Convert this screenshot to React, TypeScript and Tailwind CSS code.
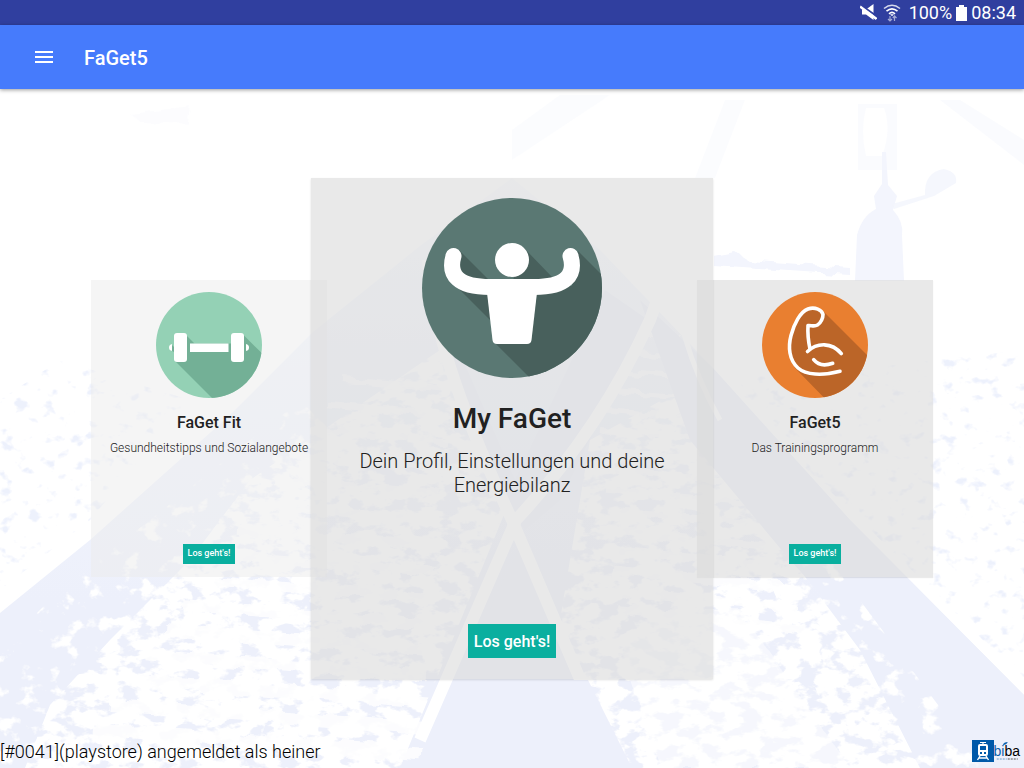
import type { ReactNode } from "react";

function StrongIcon() {
  return (
    <svg viewBox="0 0 180 180" className="size-full" aria-hidden="true">
      <defs>
        <clipPath id="strong-disc">
          <circle cx="90" cy="90" r="90" />
        </clipPath>
      </defs>
      <circle cx="90" cy="90" r="90" fill="#5a7873" />
      <g fill="#48605c" clipPath="url(#strong-disc)">
        <path d="M37 52L67 82V92L30 80Z" />
        <path d="M29 83L68 122L66 92Z" />
        <path d="M102 50L132 81L90 85Z" />
        <path d="M156 53L210 107V210H138L73 145L110 90L150 88Z" />
      </g>
      <circle cx="90" cy="62" r="17" fill="#fff" />
      <path
        d="M31.5 58C26 77 36 89 68 89H112C144 89 154 77 148.500 58"
        fill="none"
        stroke="#fff"
        strokeWidth="16"
        strokeLinecap="round"
      />
      <path d="M64 86H116L109.500 142Q109 146 105 146H75Q71 146 70.500 142Z" fill="#fff" />
    </svg>
  );
}

function DumbbellIcon() {
  return (
    <svg viewBox="0 0 106 106" className="size-full" aria-hidden="true">
      <defs>
        <clipPath id="dumbbell-disc">
          <circle cx="53" cy="53" r="53" />
        </clipPath>
      </defs>
      <circle cx="53" cy="53" r="53" fill="#94d1b5" />
      <g fill="#73b096" clipPath="url(#dumbbell-disc)">
        <path d="M19 69L30 43L38.500 51.500H76L87 42.500L140 95V120H70Z" />
        <path d="M15 52L22 59V62L14 58Z" />
      </g>
      <g fill="#fff">
        <rect x="18" y="41" width="13" height="29" rx="3" />
        <rect x="75" y="41" width="13" height="29" rx="3" />
        <rect x="34" y="51.500" width="38.500" height="8.500" />
        <path d="M16 52V59Q13 58.500 13 55.500Q13 52.500 16 52Z" />
        <path d="M90 52V59Q93 58.500 93 55.500Q93 52.500 90 52Z" />
      </g>
    </svg>
  );
}

function BicepsIcon() {
  return (
    <svg viewBox="0 0 106 106" className="size-full" aria-hidden="true">
      <defs>
        <clipPath id="biceps-disc">
          <circle cx="53" cy="53" r="53" />
        </clipPath>
      </defs>
      <circle cx="53" cy="53" r="53" fill="#e97f30" />
      <path
        d="M61 19L120 78V120H76L35 78C27 70 26 55 29 44C33 28 42 16 51 16Z"
        fill="#bb6528"
        clipPath="url(#biceps-disc)"
      />
      <g fill="none" stroke="#fff" strokeWidth="3.600" strokeLinecap="round" strokeLinejoin="round">
        <path d="M78 79.300C60 84 44 83 36 76C27 68 26 55 29 43.500C32 32 38 20 46 17C53 14.500 60 18 61 22.500C61 26 59 31 55.500 33C52 35 49 33 46 33.500C45.500 42 46.500 50 48 57" />
        <path d="M45.500 59.500C55 50.500 70 50 79.300 61.700" />
        <path d="M51.700 67.700C56 73 63 74 70.700 71.300" />
      </g>
    </svg>
  );
}

function RailwayBackdrop() {
  const leftSleepers = Array.from({ length: 15 }, (_, i) => i);
  const rightSleepers = Array.from({ length: 15 }, (_, i) => i);
  return (
    <svg
      viewBox="0 89 1024 679"
      preserveAspectRatio="none"
      className="absolute inset-0 size-full"
      aria-hidden="true"
    >
      <defs>
        <filter id="white-speckle" x="0" y="0" width="1" height="1" colorInterpolationFilters="sRGB">
          <feTurbulence type="fractalNoise" baseFrequency="0.05 0.08" numOctaves="4" seed="8" />
          <feColorMatrix values="0 0 0 0 1  0 0 0 0 1  0 0 0 0 1  8 0 0 0 -3.100" />
          <feComposite in2="SourceGraphic" operator="in" />
        </filter>
        <filter id="sparse-speckle" x="0" y="0" width="1" height="1" colorInterpolationFilters="sRGB">
          <feTurbulence type="fractalNoise" baseFrequency="0.05 0.06" numOctaves="4" seed="15" />
          <feColorMatrix values="0 0 0 0 1  0 0 0 0 1  0 0 0 0 1  8 0 0 0 -4.600" />
          <feComposite in2="SourceGraphic" operator="in" />
        </filter>
        <filter id="blue-speckle" x="0" y="0" width="1" height="1" colorInterpolationFilters="sRGB">
          <feTurbulence type="fractalNoise" baseFrequency="0.07 0.09" numOctaves="3" seed="21" />
          <feColorMatrix values="0 0 0 0 0.930  0 0 0 0 0.945  0 0 0 0 0.990  6 0 0 0 -3.650" />
          <feComposite in2="SourceGraphic" operator="in" />
        </filter>
        <filter id="rough">
          <feTurbulence type="fractalNoise" baseFrequency="0.06" numOctaves="2" seed="4" />
          <feDisplacementMap in="SourceGraphic" scale="12" />
        </filter>
        <linearGradient id="fade" gradientUnits="userSpaceOnUse" x1="0" y1="140" x2="0" y2="600">
          <stop offset="0" stopColor="#fcfdff" />
          <stop offset="0.500" stopColor="#f2f5fd" />
          <stop offset="1" stopColor="#edf0fb" />
        </linearGradient>
      </defs>
      <rect y="89" width="1024" height="679" fill="#fff" />
      <path d="M0 768V613L90 540L230 415L313 332L420 246L512 178L600 250L712 367L850 520L1024 695V768Z" fill="url(#fade)" />
      <path d="M0 400L60 360L190 400L90 520L0 590Z" fill="#fff" filter="url(#blue-speckle)" />
      <path d="M712 380L850 370L1024 350V680L850 510Z" fill="#fff" filter="url(#blue-speckle)" />
      <path d="M0 650L60 590L150 520L300 400L360 460L250 768H0Z" fill="#fff" filter="url(#sparse-speckle)" />
      <path d="M25 768L50 705L110 640L190 560L250 480L440 350L510 500L400 768Z" fill="#fff" filter="url(#white-speckle)" />
      <path d="M590 768L560 620L590 440L680 390L770 530L860 650L920 768Z" fill="#fff" filter="url(#white-speckle)" />
      <path d="M660 768L620 650L660 610L740 610L850 768Z" fill="#fff" opacity="0.500" filter="url(#rough)" />
      <g fill="none" stroke="#fff" opacity="0.850" filter="url(#rough)">
        {leftSleepers.map((i) => (
          <path
            key={i}
            d={`M${345 - i * 18} ${380 + i * 25}L${450 - i * 2} ${390 + i * 26}`}
            strokeWidth={6 + i * 0.6}
          />
        ))}
        {rightSleepers.map((i) => (
          <path
            key={i}
            d={`M${590 + i * 2} ${330 + i * 20}L${680 + i * 9} ${336 + i * 21}`}
            strokeWidth={4 + i * 0.4}
          />
        ))}
      </g>
      <g fill="#edf0fb">
        <path d="M640 300L712 367L850 520L1024 695V768H985L900 680L790 560L690 440Z" />
        <path d="M518 550L590 690L605 768H430L456 680Z" />
        <path d="M605 290L648 320L560 500L525 530L500 490L430 320L450 330L515 480Z" />
      </g>
      <path d="M760 560L830 560L985 768H850Z" fill="#fff" filter="url(#sparse-speckle)" />
      <g fill="none" stroke="#fff" strokeLinejoin="round">
        <path d="M428 260Q432 350 512 520L618 768" strokeWidth="12" />
        <path d="M675 250L650 320Q600 430 516 520L420 740" strokeWidth="12" />
        <path d="M672 240Q670 330 720 420" strokeWidth="5" />
      </g>
      <path d="M564 680H588L632 768H598Z" fill="#edf0fb" />
      <g fill="#f3f5fd">
        <path
          d="M858 104H897V170H858ZM866 108Q860 130 866 156H882Q892 130 884 108Z"
          fillRule="evenodd"
          opacity="0.400"
        />
        <path d="M882 152H886L888 185L897 196L893 210Q904 222 902 235H857Q862 216 876 209L874 196L882 184Z" />
        <path d="M857 235H902L904 281H855Z" />
        <path d="M892 204L925 195Q924 172 944 169Q958 172 956 183L934 196L894 209Z" opacity="0.800" />
        <path d="M713 256L735 252L748 260L850 268V275L713 266Z" filter="url(#rough)" />
        <path d="M512 160L610 95H560L512 130Z" opacity="0.300" />
        <path d="M695 178L725 100H745L715 178Z" opacity="0.300" />
        <path d="M940 100L1024 165V140L960 100Z" opacity="0.400" />
        <path d="M130 114L190 106L188 124L140 122Z" opacity="0.200" filter="url(#rough)" />
      </g>
    </svg>
  );
}

type Size = "large" | "small";

interface CardProps {
  size: Size;
  title: string;
  text: string;
  icon: ReactNode;
  tone: string;
}

const styles = {
  large: {
    card: "z-10 h-[501px] w-[402px] pt-5 pb-[21px] shadow-[0_1px_2px_rgba(0,0,0,0.12)]",
    disc: "size-[180px]",
    title: "mt-5 text-[28px] leading-[42px]",
    text: "mt-[9px] px-12 text-xl leading-6",
    button: "h-[34px] w-[88px] pt-0.5 text-base",
  },
  small: {
    card: "h-[297px] w-[236px] pt-3 pb-[13px]",
    disc: "size-[106px]",
    title: "mt-[13px] text-base leading-6",
    text: "mt-1 px-4 text-xs leading-[18px]",
    button: "h-5 w-[52px] text-[9px]",
  },
};

function Card({ size, title, text, icon, tone }: CardProps) {
  const s = styles[size];
  return (
    <article className={`relative flex min-w-0 flex-col items-center text-center ${s.card} ${tone}`}>
      <div className={`shrink-0 ${s.disc}`}>{icon}</div>
      <h2 className={`font-medium text-[#212121] ${s.title}`}>{title}</h2>
      <p className={`font-light text-[#212121] ${s.text}`}>{text}</p>
      <button
        type="button"
        className={`mt-auto whitespace-nowrap bg-[#0aaf9f] font-medium text-white ${s.button}`}
      >
        Los geht's!
      </button>
    </article>
  );
}

function StatusBar() {
  return (
    <div className="flex h-[25px] items-center justify-end bg-[#303f9f] pr-2 text-lg text-white">
      <svg viewBox="0 0 17 17" className="mr-1.5 size-[17px]" aria-hidden="true">
        <path d="M2 5.500H6L13.500 0V16L6 10.500H2Z" fill="#fff" />
        <path d="M0 0.500L17 12.500" stroke="#303f9f" strokeWidth="2" />
        <path d="M0 2.500L16.500 15" stroke="#fff" strokeWidth="2.400" />
      </svg>
      <svg viewBox="0 0 18 18" className="mr-2 size-[18px]" aria-hidden="true">
        <g fill="none" stroke="#fff" strokeWidth="1.600">
          <path d="M1 4.500Q9 -2 17 4.500" opacity="0.800" />
          <path d="M3.500 7.200Q9 2.500 14.500 7.200" />
          <path d="M6 9.800Q9 7 12 9.800" />
        </g>
        <path d="M7 10.200H11L9 12.300Z" fill="#fff" />
        <path d="M7 12V17M5 15L7 17L9 15M11.500 17V12M9.800 14L11.500 12L13.500 14" fill="none" stroke="#a4abd6" strokeWidth="1.200" />
      </svg>
      <span>100%</span>
      <svg viewBox="0 0 11 16" className="mx-1 h-4 w-[11px]" aria-hidden="true">
        <path d="M3 0H8V2H11V16H0V2H3Z" fill="#fff" />
      </svg>
      <span>08:34</span>
    </div>
  );
}

function BibaLogo() {
  return (
    <div className="flex items-start pr-1">
      <svg viewBox="0 0 22 22" className="size-[22px]" aria-hidden="true">
        <rect width="22" height="22" fill="#0059a9" />
        <path d="M8 2.500H14M11 2.500V4" stroke="#fff" strokeWidth="1.200" />
        <path
          d="M8 4H14Q16 4 16 6V14Q16 16 14 16H8Q6 16 6 14V6Q6 4 8 4ZM8 6V10H14V6ZM8 12V14H10V12ZM12 12V14H14V12Z"
          fill="#fff"
          fillRule="evenodd"
        />
        <path d="M8 16L5.500 20M14 16L16.500 20M7 18H15" stroke="#fff" strokeWidth="1.400" />
      </svg>
      <div className="relative flex flex-col">
        <span className="font-['Liberation_Sans',sans-serif] text-sm leading-[22px] text-black">
          <span className="text-[#0b61ad]">bi</span>ba
        </span>
        <svg viewBox="0 0 25 22" className="absolute inset-0 size-full" aria-hidden="true">
          <path d="M8 5Q9 2 13 2Q12 5 8 5Z" fill="#0b61ad" />
          <path d="M2 19H12" stroke="#6b9fcc" strokeDasharray="2 1" />
          <path d="M13 19H23" stroke="#555" strokeDasharray="2 1" />
        </svg>
      </div>
    </div>
  );
}

export default function App() {
  return (
    <div className="flex min-h-screen flex-col bg-white font-[Roboto,sans-serif]">
      <StatusBar />
      <header className="z-20 flex h-16 items-center bg-[#467bfc] pt-0.5 pl-8 shadow-[0_1px_4px_rgba(0,0,0,0.4)]">
        <button type="button" aria-label="Menu" className="size-6">
          <svg viewBox="0 0 24 24" className="size-6" aria-hidden="true">
            <path d="M3 5H21V7H3ZM3 10H21V12H3ZM3 15H21V17H3Z" fill="#fff" />
          </svg>
        </button>
        <h1 className="ml-7 text-xl font-medium text-white">FaGet5</h1>
      </header>
      <main className="relative grid flex-1 grid-rows-[1fr_auto_1fr]">
        <RailwayBackdrop />
        <section className="row-start-2 flex items-center justify-center">
          <Card
            size="small"
            title="FaGet Fit"
            text="Gesundheitstipps und Sozialangebote"
            icon={<DumbbellIcon />}
            tone="-mr-4 bg-[#ebebeb]/50"
          />
          <Card
            size="large"
            title="My FaGet"
            text="Dein Profil, Einstellungen und deine Energiebilanz"
            icon={<StrongIcon />}
            tone="bg-[#dadada]/60"
          />
          <Card
            size="small"
            title="FaGet5"
            text="Das Trainingsprogramm"
            icon={<BicepsIcon />}
            tone="-ml-4 bg-[#dadada]/60 shadow-[0_1px_1px_rgba(0,0,0,0.08)]"
          />
        </section>
        <footer className="relative row-start-3 flex items-end justify-between self-end pb-1.5">
          <p className="text-lg leading-5 font-light text-black">
            [#0041](playstore) angemeldet als heiner
          </p>
          <BibaLogo />
        </footer>
      </main>
    </div>
  );
}
